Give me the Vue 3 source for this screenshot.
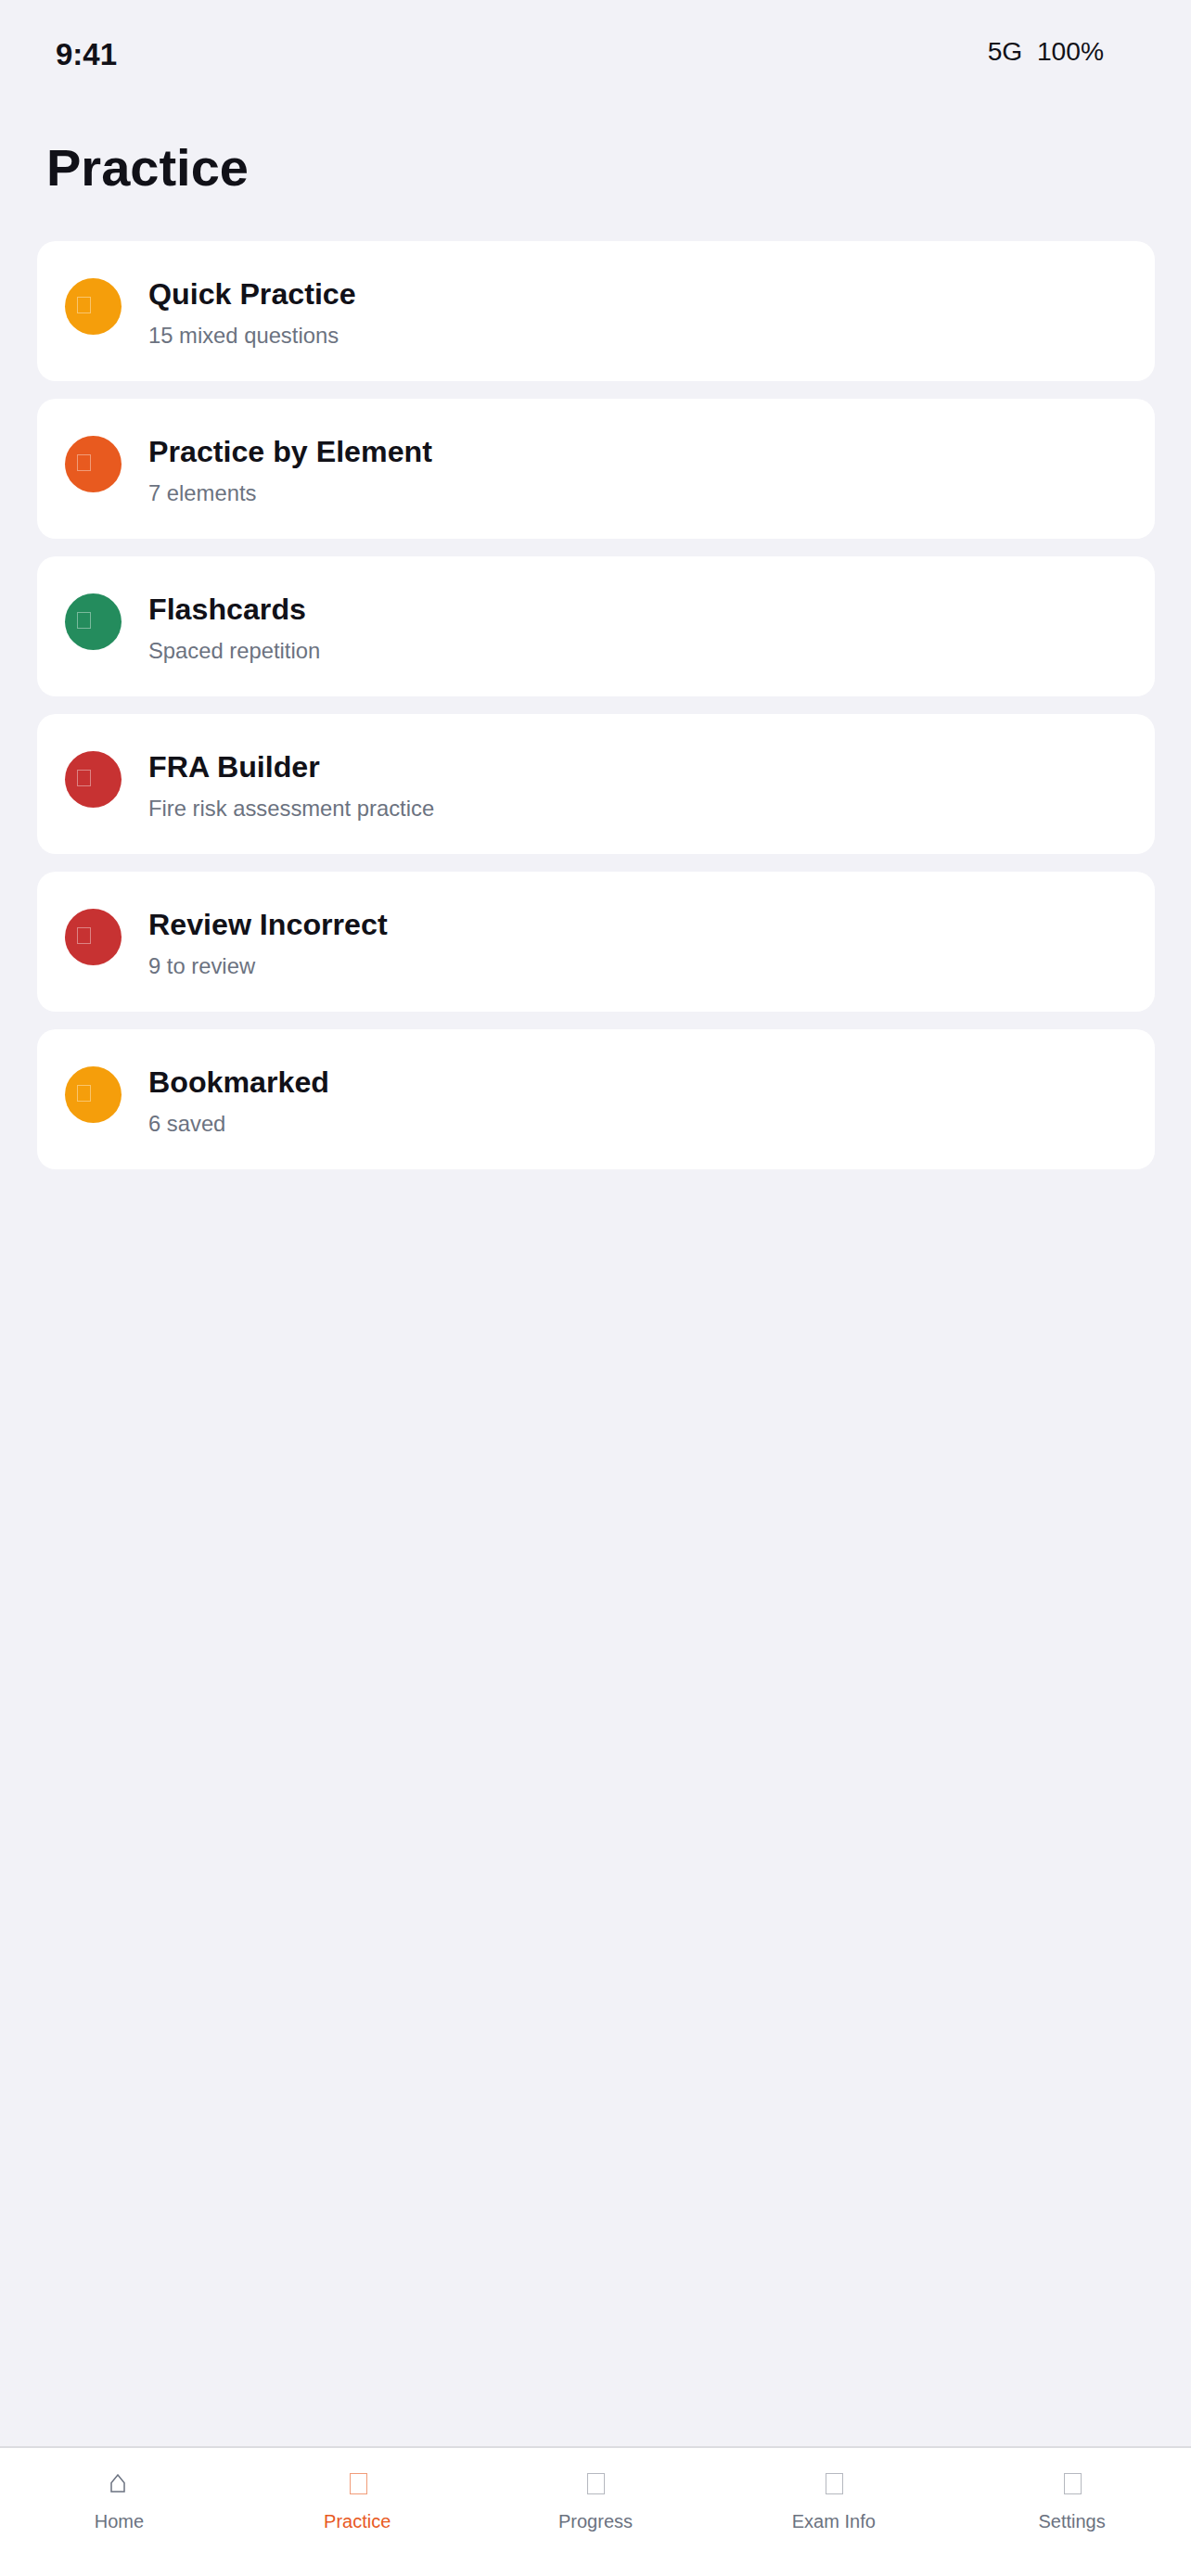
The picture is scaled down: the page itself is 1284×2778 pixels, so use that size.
<template>
  <div class="screen">
    <div class="status">
      <span class="time">9:41</span>
      <span class="signal">5G&nbsp;&nbsp;100%</span>
    </div>
    <h1 class="title">Practice</h1>
    <ul class="list">
      <li v-for="item in items" :key="item.name" class="card">
        <div class="badge" :class="item.tone"><i class="tofu"></i></div>
        <div class="text">
          <b>{{ item.name }}</b>
          <p>{{ item.sub }}</p>
        </div>
      </li>
    </ul>
    <nav class="tabs">
      <div v-for="tab in tabs" :key="tab.label" class="tab" :class="{ active: tab.active }">
        <span class="glyph">
          <svg v-if="tab.home" class="home" viewBox="0 0 16 20" width="16" height="20">
            <path d="M1 19V9.5L8 1L15 9.5V19Z" />
          </svg>
          <i v-else class="tofu"></i>
        </span>
        <span class="label">{{ tab.label }}</span>
      </div>
    </nav>
  </div>
</template>

<script setup>
const items = [
  { name: 'Quick Practice', sub: '15 mixed questions', tone: 'amber' },
  { name: 'Practice by Element', sub: '7 elements', tone: 'orange' },
  { name: 'Flashcards', sub: 'Spaced repetition', tone: 'green' },
  { name: 'FRA Builder', sub: 'Fire risk assessment practice', tone: 'red' },
  { name: 'Review Incorrect', sub: '9 to review', tone: 'red' },
  { name: 'Bookmarked', sub: '6 saved', tone: 'amber' },
];

const tabs = [
  { label: 'Home', home: true },
  { label: 'Practice', active: true },
  { label: 'Progress' },
  { label: 'Exam Info' },
  { label: 'Settings' },
];
</script>

<style>
html, body {
  margin: 0;
  background: #f2f2f7;
}
</style>

<style scoped>
* {
  box-sizing: border-box;
}
.screen {
  height: 2778px;
  display: flex;
  flex-direction: column;
  background: #f2f2f7;
  color: #111118;
  font-family: "Liberation Sans", Arial, sans-serif;
}
.status {
  display: flex;
  justify-content: space-between;
  padding: 38px 94px 0 60px;
  height: 149px;
}
.time {
  font-size: 33px;
  font-weight: 700;
  line-height: 42px;
}
.signal {
  font-size: 28.2px;
  line-height: 35px;
}
.title {
  margin: 0;
  padding: 0 0 0 50px;
  font-size: 56px;
  line-height: 64px;
  font-weight: 700;
}
.list {
  list-style: none;
  margin: 0;
  padding: 47px 39px 0 40px;
  display: flex;
  flex-direction: column;
  gap: 19px;
}
.card {
  height: 151px;
  padding: 40px 30px 0;
  display: flex;
  gap: 29px;
  background: #fff;
  border-radius: 20px;
}
.badge {
  width: 61px;
  height: 61px;
  flex: none;
  border-radius: 50%;
  padding: 20px 0 0 13px;
}
.badge .tofu {
  display: block;
  width: 15px;
  height: 18px;
  border: 1px solid rgba(255, 255, 255, 0.4);
}
.amber { background: #f59e0b; }
.orange { background: #e85a1f; }
.green { background: #248c5d; }
.red { background: #c73232; }
.text b {
  display: block;
  margin-top: -4px;
  font-size: 32.2px;
  line-height: 42px;
}
.text p {
  margin: 8px 0 0;
  font-size: 23.8px;
  line-height: 32px;
  color: #6b7280;
}
.tabs {
  margin-top: auto;
  height: 140px;
  display: flex;
  background: #fff;
  border-top: 2px solid #dcdce0;
}
.tab {
  flex: 1;
  display: flex;
  flex-direction: column;
  align-items: center;
  padding-top: 25px;
  color: #6b7280;
}
.tab.active {
  color: #e85a1f;
}
.glyph {
  height: 26px;
  display: flex;
  align-items: center;
}
.glyph .tofu {
  display: block;
  width: 19px;
  height: 23px;
  margin-left: 2px;
  border: 1px solid rgba(107, 114, 128, 0.5);
}
.active .glyph .tofu {
  border-color: rgba(232, 90, 31, 0.6);
}
.home {
  margin-right: 2px;
  fill: none;
  stroke: currentColor;
  stroke-width: 1.5;
}
.label {
  margin-top: 15px;
  font-size: 20px;
  line-height: 26px;
}
</style>
